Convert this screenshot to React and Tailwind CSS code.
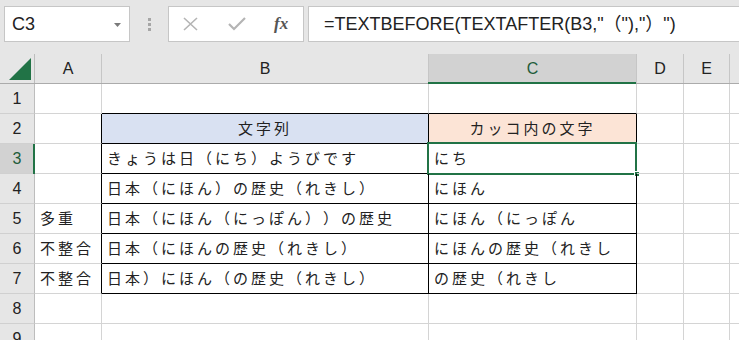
import React from 'react'

const GRID = 'border-[#d4d4d4]'
const CJK = { fontFamily: '"Noto Sans CJK JP", "Noto Sans", sans-serif' }

const cols = [
  { key: 'A', w: 'w-[67px]' },
  { key: 'B', w: 'w-[327px]' },
  { key: 'C', w: 'w-[208px]' },
  { key: 'D', w: 'w-[47px]' },
  { key: 'E', w: 'w-[46px]' },
]

// row data: [A, B, C]
const rows = [
  ['', '', ''],
  ['', '文字列', 'カッコ内の文字'],
  ['', 'きょうは日（にち）ようびです', 'にち'],
  ['', '日本（にほん）の歴史（れきし）', 'にほん'],
  ['多重', '日本（にほん（にっぽん））の歴史', 'にほん（にっぽん'],
  ['不整合', '日本（にほんの歴史（れきし）', 'にほんの歴史（れきし'],
  ['不整合', '日本）にほん（の歴史（れきし）', 'の歴史（れきし'],
  ['', '', ''],
  ['', '', ''],
]

function Toolbar() {
  return (
    <div className="flex h-[54px] items-start bg-[#e6e6e6] pt-[6px] pl-[4px]">
      {/* name box */}
      <div className="relative flex h-[36px] w-[126px] items-center border border-[#c6c6c6] bg-white pl-[7px]">
        <span className="text-[18px] text-[#222]" style={{ fontFamily: '"Liberation Sans", Arial, sans-serif' }}>C3</span>
        <svg className="absolute right-[8px] top-[16px]" width="7" height="4" viewBox="0 0 7 4">
          <path d="M0 0h7L3.5 4z" fill="#7a7a7a" />
        </svg>
      </div>
      {/* dots */}
      <div className="flex h-[36px] w-[38px] flex-col items-center justify-center gap-[2px]">
        <div className="h-[3px] w-[3px] bg-[#a6a6a6]" />
        <div className="h-[3px] w-[3px] bg-[#a6a6a6]" />
        <div className="h-[3px] w-[3px] bg-[#a6a6a6]" />
      </div>
      {/* buttons */}
      <div className="flex h-[36px] w-[136px] items-center border border-[#c6c6c6] bg-white">
        <svg className="ml-[14px]" width="15" height="14" viewBox="0 0 15 14">
          <path d="M1 1l13 12M14 1L1 13" stroke="#b4b4b4" strokeWidth="1.6" fill="none" />
        </svg>
        <svg className="ml-[30px]" width="18" height="14" viewBox="0 0 18 14">
          <path d="M1 7l5 5L17 1" stroke="#b4b4b4" strokeWidth="2.2" fill="none" />
        </svg>
        <span
          className="ml-[28px] text-[17px] font-bold italic text-[#555]"
          style={{ fontFamily: '"Liberation Serif", "Times New Roman", serif' }}
        >
          fx
        </span>
      </div>
      {/* formula */}
      <div className="ml-[4px] flex h-[36px] flex-1 items-center border border-r-0 border-[#c6c6c6] bg-white pl-[15px]">
        <span
          className="whitespace-pre text-[18px] text-[#222] [text-spacing-trim:space-all]"
          style={{ fontFamily: '"Liberation Sans", "Noto Sans CJK JP", sans-serif' }}
        >
          =TEXTBEFORE(TEXTAFTER(B3,"（"),"）")
        </span>
      </div>
    </div>
  )
}

function HeaderRow() {
  return (
    <div className="flex h-[30px] border-b border-[#ababab] bg-[#e6e6e6]" style={{ fontFamily: '"Liberation Sans", Arial, sans-serif' }}>
      <div className="relative w-[35px] border-r border-[#bdbdbd]">
        <svg className="absolute left-[9px] top-[4px]" width="22" height="22" viewBox="0 0 22 22">
          <path d="M22 0V22H0z" fill="#217346" />
        </svg>
      </div>
      {cols.map((c) => (
        <div
          key={c.key}
          className={`relative flex items-center justify-center border-r border-[#c6c6c6] text-[16px] ${c.w} ${
            c.key === 'C' ? 'bg-[#d2d2d2] text-[#1e5c3a]' : 'text-[#222]'
          }`}
        >
          {c.key}
          {c.key === 'C' && <div className="absolute bottom-[-1px] left-[-1px] right-0 h-[2px] bg-[#217346]" />}
        </div>
      ))}
      <div className="flex-1" />
    </div>
  )
}

function Cell({ w, children, className = '', center, extra }) {
  return (
    <div
      className={`relative flex shrink-0 items-center border-r border-b text-[15px] tracking-[3px] text-[#222] [text-spacing-trim:space-all] ${w} ${
        center ? 'justify-center' : 'pl-[5px]'
      } ${className}`}
      style={CJK}
    >
      <span className="whitespace-nowrap">{children}</span>
      {extra}
    </div>
  )
}

function Row({ n, data }) {
  const [a, b, c] = data
  const inTable = n >= 2 && n <= 7
  const selected = n === 3
  return (
    <div className="flex h-[30px]">
      <div
        className={`relative flex w-[35px] shrink-0 items-center justify-center border-r border-b border-r-[#bdbdbd] border-b-[#d0d0d0] text-[16px] ${
          selected ? 'bg-[#d2d2d2] text-[#1e5c3a]' : 'bg-[#e6e6e6] text-[#222]'
        }`}
        style={{ fontFamily: '"Liberation Sans", Arial, sans-serif' }}
      >
        {n}
        {selected && <div className="absolute right-[-1px] top-0 bottom-[-1px] w-[2px] bg-[#217346]" />}
      </div>
      <Cell w="w-[67px]" className={`${GRID} ${inTable ? 'border-r-black' : ''}`}>
        {a}
      </Cell>
      <Cell
        w="w-[327px]"
        center={n === 2}
        className={`${GRID} ${inTable ? 'border-r-black border-b-black' : ''} ${n === 1 ? 'border-b-black' : ''} ${
          n === 2 ? 'bg-[#d9e1f2]' : ''
        }`}
      >
        {b}
      </Cell>
      <Cell
        w="w-[208px]"
        center={n === 2}
        className={`${GRID} ${inTable ? 'border-r-black border-b-black' : ''} ${n === 1 ? 'border-b-black' : ''} ${
          n === 2 ? 'bg-[#fce4d6]' : ''
        }`}
        extra={
          selected && (
            <>
              <div className="pointer-events-none absolute -left-[2px] -top-[2px] -right-[1px] -bottom-[2px] border-2 border-[#217346]" />
              <div className="absolute -right-[4px] -bottom-[4px] h-[6px] w-[6px] border border-white bg-[#217346]" />
            </>
          )
        }
      >
        {c}
      </Cell>
      <Cell w="w-[47px]" className={GRID} />
      <Cell w="w-[46px]" className={GRID} />
      <div className={`flex-1 border-b ${GRID}`} />
    </div>
  )
}

export default function App() {
  return (
    <div className="h-[340px] w-[739px] overflow-hidden bg-white">
      <Toolbar />
      <HeaderRow />
      {rows.map((r, i) => (
        <Row key={i} n={i + 1} data={r} />
      ))}
    </div>
  )
}
